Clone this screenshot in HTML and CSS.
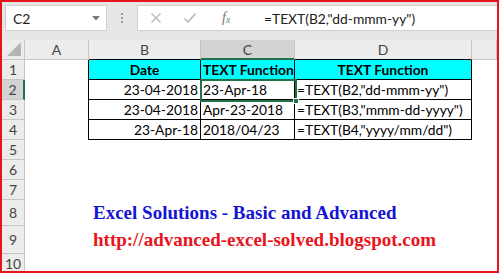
FILE: index.html
```html
<!DOCTYPE html>
<html>
<head>
<meta charset="utf-8">
<link rel="stylesheet" href="styles.css">
</head>
<body>
<div class="frame">
  <div class="toolbar">
    <div class="namebox">
      <span class="name">C2</span>
      <svg class="dd" width="8" height="5" viewBox="0 0 8 5"><path d="M0 0H8L4 4.5Z" fill="#7a7a7a"/></svg>
    </div>
    <div class="dots"><i></i><i></i><i></i></div>
    <div class="fbar">
      <div class="btns">
        <svg class="btn" width="12" height="12" viewBox="0 0 12 12"><path d="M1.5 1.5L10.5 10.5M10.5 1.5L1.5 10.5" stroke="#b8b8b8" stroke-width="1.4"/></svg>
        <svg class="btn" width="14" height="12" viewBox="0 0 14 12"><path d="M1.5 6.5L5 10L12.5 1.5" stroke="#b8b8b8" stroke-width="1.6" fill="none"/></svg>
        <span class="fx"><i>f</i><sub>x</sub></span>
      </div>
      <div class="formula">=TEXT(B2,"dd-mmm-yy")</div>
    </div>
  </div>
  <div class="sheet">
    <div class="hd corner"><svg width="14" height="14" viewBox="0 0 14 14"><path d="M14 0V14H0Z" fill="#b4b4b4"/></svg></div>
    <div class="hd col">A</div>
    <div class="hd col tb">B</div>
    <div class="hd col sel">C</div>
    <div class="hd col tb">D</div>
    <div class="hd col"></div>

    <div class="hd row">1</div>
    <div class="c ta"></div>
    <div class="c t h center b">Date</div>
    <div class="c t h center b">TEXT Function</div>
    <div class="c t h center b">TEXT Function</div>
    <div class="c"></div>

    <div class="hd row rsel">2</div>
    <div class="c ta"></div>
    <div class="c t right">23-04-2018</div>
    <div class="c t">23-Apr-18</div>
    <div class="c t">=TEXT(B2,"dd-mmm-yy")</div>
    <div class="c"></div>

    <div class="hd row">3</div>
    <div class="c ta"></div>
    <div class="c t right">23-04-2018</div>
    <div class="c t">Apr-23-2018</div>
    <div class="c t">=TEXT(B3,"mmm-dd-yyyy")</div>
    <div class="c"></div>

    <div class="hd row">4</div>
    <div class="c ta"></div>
    <div class="c t right">23-Apr-18</div>
    <div class="c t">2018/04/23</div>
    <div class="c t">=TEXT(B4,"yyyy/mm/dd")</div>
    <div class="c"></div>

    <div class="hd row">5</div>
    <div class="c span"></div>
    <div class="hd row">6</div>
    <div class="c span"></div>
    <div class="hd row">7</div>
    <div class="c span"></div>
    <div class="hd row">8</div>
    <div class="c"></div>
    <div class="c span4 note blue">Excel Solutions - Basic and Advanced</div>
    <div class="hd row">9</div>
    <div class="c"></div>
    <div class="c span4 note red">http://advanced-excel-solved.blogspot.com</div>
    <div class="hd row">10</div>
    <div class="c span"></div>

    <div class="selbox"><span class="handle"></span></div>
  </div>
</div>
</body>
</html>
```

FILE: styles.css
```css
* { box-sizing: border-box; }
html, body { margin: 0; padding: 0; background: #fff; }
.frame {
  width: 499px;
  height: 273px;
  border: 2px solid #e8141c;
  background: #e6e6e6;
  overflow: hidden;
  font-family: Lato, "Liberation Sans", sans-serif;
}
.toolbar {
  height: 38px;
  display: flex;
  align-items: flex-start;
  padding: 3px 0 0 3px;
}
.namebox {
  width: 102px;
  height: 26px;
  background: #fff;
  border: 1px solid #d0d0d0;
  display: flex;
  align-items: center;
  justify-content: space-between;
  padding: 0 6px 0 7px;
}
.name { font-size: 14px; color: #222; }
.dd { margin-top: 1px; }
.dots {
  width: 30px;
  height: 26px;
  display: flex;
  flex-direction: column;
  align-items: center;
  justify-content: center;
  gap: 2px;
}
.dots i { display: block; width: 2px; height: 2px; background: #9a9a9a; }
.fbar {
  flex: 1;
  height: 26px;
  background: #fff;
  border: 1px solid #d0d0d0;
  border-right: none;
  display: flex;
  align-items: center;
}
.btns {
  display: flex;
  align-items: center;
  width: 123px;
  padding-left: 12px;
  gap: 0;
}
.btns .btn:first-child { margin-right: 21px; }
.btns .btn:nth-child(2) { margin-right: 25px; }
.fx { font-family: "Liberation Serif", serif; font-size: 14px; color: #777; }
.fx i { font-style: italic; }
.fx sub { font-size: 10px; font-style: italic; vertical-align: -1px; }
.formula { font-size: 13.8px; color: #222; padding-left: 3px; }

.sheet {
  position: relative;
  display: grid;
  grid-template-columns: 23px 64px 112px 94px 177px 1fr;
  grid-template-rows: 20px repeat(7, 20px) 26px 28px 20px;
  background: #fff;
  font-size: 13.8px;
  color: #000;
}
.hd {
  background: #ececec;
  color: #444;
  display: flex;
  align-items: center;
  justify-content: center;
  border-right: 1px solid #c6c6c6;
  border-bottom: 1px solid #c6c6c6;
  font-size: 14px;
}
.corner { justify-content: flex-end; align-items: flex-end; padding: 0 3px 3px 0; }
.col.tb { border-bottom-color: #000; }
.col.sel { background: #d3d3d3; border-bottom: 2px solid #217346; color: #444; }
.row { grid-column: 1; }
.row.rsel { background: #d3d3d3; border-right: 2px solid #217346; }
.c { white-space: nowrap; line-height: 20px; padding: 0 2px; }
.ta { border-right: 1px solid #000; }
.t { border-right: 1px solid #000; border-bottom: 1px solid #000; }
.h { background: #00ffff; }
.center { text-align: center; }
.right { text-align: right; }
.b { font-weight: bold; }
.span { grid-column: 2 / -1; }
.span4 { grid-column: 3 / -1; }
.note {
  font-family: "Liberation Serif", "Times New Roman", serif;
  font-weight: bold;
  font-size: 19px;
  padding-left: 4px;
  display: flex;
  align-items: center;
}
.blue { color: #1414d2; }
.red { color: #e8141c; }
.selbox {
  position: absolute;
  left: 198px;
  top: 39px;
  width: 97px;
  height: 23px;
  border: 2px solid #217346;
}
.handle {
  position: absolute;
  right: -4px;
  bottom: -4px;
  width: 6px;
  height: 6px;
  background: #217346;
  border: 1px solid #fff;
}
```
